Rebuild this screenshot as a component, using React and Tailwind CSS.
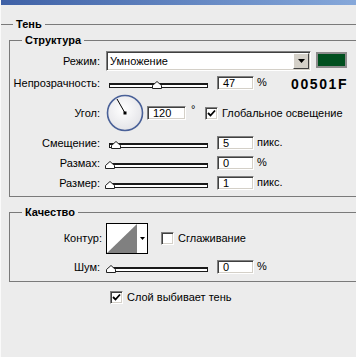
import React from 'react'

const sunken = 'border border-t-[#808080] border-l-[#808080] border-b-white border-r-white shadow-[inset_1px_1px_0_#404040,inset_-1px_-1px_0_#d4d0c8] bg-white'

function Field({ value, className = '' }) {
    return (
        <div className={`${sunken} h-[14px] w-[37px] pl-[5px] text-[11px] leading-[12px] ${className}`}>{value}</div>
    )
}

function Check({ checked }) {
    return (
        <div className={`${sunken} w-[13px] h-[13px] shrink-0 flex items-center justify-center`}>
            {checked && (
                <svg width="9" height="9" viewBox="0 0 9 9">
                    <path d="M1 4 L3.5 6.5 L8 1.5" fill="none" stroke="#000" strokeWidth="1.8" />
                </svg>
            )}
        </div>
    )
}

function Slider({ thumb }) {
    return (
        <div className="relative w-[103px] h-[14px] pt-[7px] shrink-0">
            <div className="ml-[4px] h-[5px] border border-[#1a1a1a] border-t-2 bg-white" />
            <svg className={`absolute top-[5px] ${thumb}`} width="10" height="8" viewBox="0 0 10 8">
                <polygon points="0.5,7.5 0.5,4.5 5,0.5 9.5,4.5 9.5,7.5" fill="#fff" stroke="#222" strokeWidth="1" />
            </svg>
        </div>
    )
}

function SliderRow({ label, thumb, value, unit, extra }) {
    return (
        <div className="flex items-start h-[14px]">
            <div className="w-[90px] text-right leading-[14px] shrink-0">{label}</div>
            <div className="ml-[5px]"><Slider thumb={thumb} /></div>
            <Field value={value} className="ml-[9px] shrink-0" />
            <div className="ml-[3px] w-[34px] leading-[12px] shrink-0">{unit}</div>
            {extra}
        </div>
    )
}

function Dial() {
    return (
        <svg width="38" height="38" viewBox="0 0 38 38">
            <defs>
                <radialGradient id="dialFill" cx="45%" cy="40%" r="60%">
                    <stop offset="0%" stopColor="#ffffff" />
                    <stop offset="100%" stopColor="#e4e4e8" />
                </radialGradient>
            </defs>
            <circle cx="19" cy="19" r="17.5" fill="url(#dialFill)" stroke="#4a6198" strokeWidth="1.6" />
            <line x1="19" y1="19" x2="11" y2="5" stroke="#000" strokeWidth="1" />
            <rect x="17.5" y="17.5" width="3" height="3" fill="#000" />
        </svg>
    )
}

export default function App() {
    return (
        <div className="w-[356px] h-[357px] overflow-hidden bg-[#ececec] border-l border-l-[#fafafa] text-[11px] text-black font-['Liberation_Sans',Arial,sans-serif]">
            <div className="h-[5px] bg-linear-to-r from-[#3f61a6] to-[#86a8da]" />

            <fieldset className="mt-[13px] w-[360px] border-t border-t-[#7a7a7a] pl-[8px]">
                <legend className="ml-[4px] px-[3px] font-bold leading-[12px]">Тень</legend>

                <fieldset className="mt-[4px] w-[352px] border border-[#7a7a7a] pb-[6px]">
                    <legend className="ml-[12px] px-[3px] font-bold leading-[12px]">Структура</legend>

                    <div className="flex items-start mt-[5px] h-[20px]">
                        <div className="w-[90px] text-right leading-[20px] shrink-0">Режим:</div>
                        <div className={`${sunken} ml-[6px] w-[205px] h-[20px] flex items-center justify-between`}>
                            <span className="pl-[3px] leading-[14px]">Умножение</span>
                            <div className="mr-[1px] w-[16px] h-[16px] bg-[#d4d0c8] border border-t-white border-l-white border-b-[#404040] border-r-[#404040] flex items-center justify-center">
                                <svg width="7" height="4" viewBox="0 0 7 4"><polygon points="0,0 7,0 3.5,4" fill="#000" /></svg>
                            </div>
                        </div>
                        <div className="ml-[5px] mt-[1px] w-[31px] h-[16px] border-2 border-[#8c8c8c] bg-[#00501f]" />
                    </div>

                    <div className="mt-[5px]">
                        <SliderRow
                            label="Непрозрачность:"
                            thumb="left-[47px]"
                            value="47"
                            unit="%"
                            extra={<div className="font-bold text-[14px] leading-[14px] tracking-[1.6px] mt-[1px]">00501F</div>}
                        />
                    </div>

                    <div className="flex items-center mt-[4px] h-[38px]">
                        <div className="w-[90px] text-right shrink-0">Угол:</div>
                        <div className="ml-[6px]"><Dial /></div>
                        <Field value="120" className="ml-[3px] w-[39px] shrink-0" />
                        <span className="ml-[5px] w-[14px] -mt-[8px]">°</span>
                        <Check checked />
                        <span className="ml-[4px]">Глобальное освещение</span>
                    </div>

                    <div className="mt-[4px] flex flex-col gap-[6px]">
                        <SliderRow label="Смещение:" thumb="left-[6px]" value="5" unit="пикс." />
                        <SliderRow label="Размах:" thumb="left-[0px]" value="0" unit="%" />
                        <SliderRow label="Размер:" thumb="left-[0px]" value="1" unit="пикс." />
                    </div>
                </fieldset>

                <fieldset className="mt-[9px] w-[352px] border border-[#7a7a7a] pb-[7px]">
                    <legend className="ml-[12px] px-[3px] font-bold leading-[12px]">Качество</legend>

                    <div className="flex items-center mt-[5px] h-[31px]">
                        <div className="w-[92px] text-right shrink-0">Контур:</div>
                        <div className="ml-[4px] w-[42px] h-[31px] border border-black bg-white flex">
                            <svg width="30" height="29" viewBox="0 0 30 29">
                                <rect x="0" y="0" width="30" height="29" fill="#fff" />
                                <polygon points="0,29 30,0 30,29" fill="#808080" />
                            </svg>
                            <div className="flex-1 border-l border-l-white flex items-center justify-center">
                                <svg width="5" height="3" viewBox="0 0 5 3"><polygon points="0,0 5,0 2.5,3" fill="#000" /></svg>
                            </div>
                        </div>
                        <div className="ml-[13px]"><Check /></div>
                        <span className="ml-[4px]">Сглаживание</span>
                    </div>

                    <div className="mt-[6px]">
                        <SliderRow label="Шум:" thumb="left-[1px]" value="0" unit="%" />
                    </div>
                </fieldset>

                <div className="flex items-center mt-[7px] ml-[101px]">
                    <Check checked />
                    <span className="ml-[4px]">Слой выбивает тень</span>
                </div>
            </fieldset>
        </div>
    )
}
